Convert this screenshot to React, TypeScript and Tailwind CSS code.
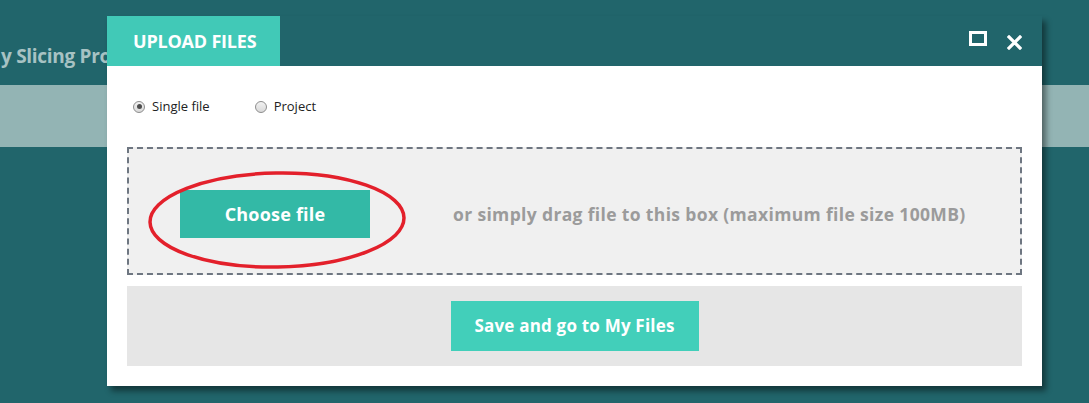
import { useState } from 'react';

const heading = { fontFamily: '"Open Sans", Lato, sans-serif' };

function Radio({ checked, label, onClick }: { checked: boolean; label: string; onClick: () => void }) {
  return (
    <button onClick={onClick} className="flex items-center gap-[7px] text-[13px] text-[#222]" style={{ fontFamily: '"Open Sans", sans-serif' }}>
      <span className="flex h-[12px] w-[12px] items-center justify-center rounded-full border border-[#8d8d8d] bg-gradient-to-b from-[#f2f2f2] to-[#d9d9d9]">
        {checked && <span className="h-[5px] w-[5px] rounded-full bg-[#4d4d4d]" />}
      </span>
      {label}
    </button>
  );
}

export default function App() {
  const [mode, setMode] = useState<'single' | 'project'>('single');

  return (
    <div className="relative h-[403px] w-full overflow-hidden bg-[#21656b]">
      {/* Page behind the dialog */}
      <div className="flex h-[85px] items-center pt-[27px]">
        <span className="ml-[1px] whitespace-nowrap text-[19px] font-bold tracking-[-0.3px] text-[#a7c2c3]" style={heading}>
          y Slicing Project
        </span>
      </div>
      <div className="h-[62px] bg-[#93b4b4]" />

      {/* Dialog */}
      <div className="absolute left-[107px] top-[16px] w-[935px] shadow-[4px_5px_6px_rgba(0,0,0,0.45)]">
        <div className="flex h-[50px] items-stretch justify-between bg-[#21656b]">
          <div className="flex w-[173px] items-center bg-[#41c9b7] pl-[26px] text-[18px] font-bold tracking-[-0.2px] text-white" style={heading}>
            UPLOAD FILES
          </div>
          <div className="flex items-center gap-[20px] pr-[20px]">
            <span className="mt-[-6px] h-[15px] w-[18px] border-[3px] border-white" />
            <svg width="15" height="15" viewBox="0 0 15 15" className="mt-[2px]">
              <path d="M2 2L13 13M13 2L2 13" stroke="white" strokeWidth="3.2" strokeLinecap="square" />
            </svg>
          </div>
        </div>

        <div className="bg-white px-[20px] pb-[20px]">
          <div className="flex h-[81px] items-center gap-[45px] pl-[6px]">
            <Radio checked={mode === 'single'} label="Single file" onClick={() => setMode('single')} />
            <Radio checked={mode === 'project'} label="Project" onClick={() => setMode('project')} />
          </div>

          <div className="relative flex h-[128px] items-center border-2 border-dashed border-[#6e7681] bg-[#f0f0f0] pl-[51px] pt-[6px]">
            <button className="h-[48px] w-[190px] bg-[#33b9a6] text-[18px] font-bold tracking-[0.2px] text-white" style={heading}>
              Choose file
            </button>
            <span className="ml-[83px] whitespace-nowrap text-[17.5px] font-bold tracking-[0.35px] text-[#9b9b9b]" style={heading}>
              or simply drag file to this box (maximum file size 100MB)
            </span>
            {/* red annotation */}
            <svg className="pointer-events-none absolute left-[17px] top-[20px]" width="262" height="102" viewBox="0 0 262 102">
              <ellipse cx="131" cy="51" rx="127" ry="47" fill="none" stroke="#e3202b" strokeWidth="3.5" transform="rotate(-1 131 51)" />
            </svg>
          </div>

          <div className="mt-[11px] flex h-[80px] items-center justify-center bg-[#e6e6e6]">
            <button className="h-[50px] w-[248px] bg-[#42cfba] text-[17px] font-bold tracking-[0.2px] text-white" style={heading}>
              Save and go to My Files
            </button>
          </div>
        </div>
      </div>
    </div>
  );
}
